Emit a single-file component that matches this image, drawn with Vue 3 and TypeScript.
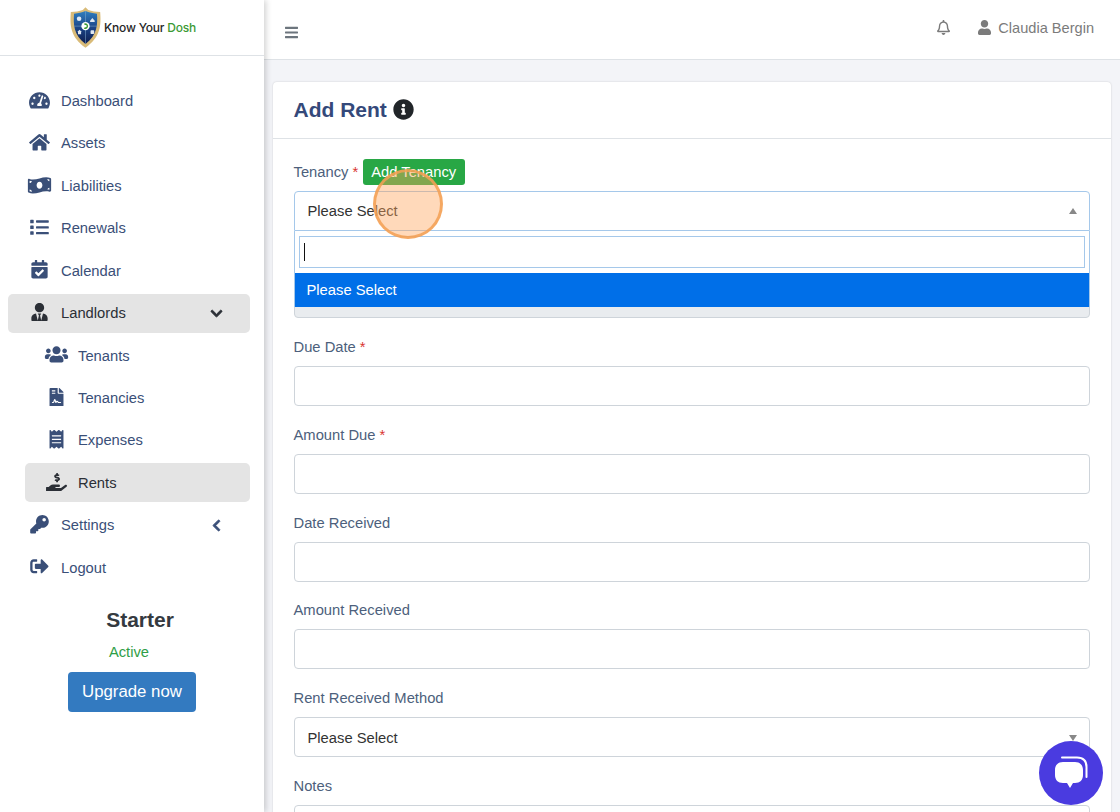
<template>
  <div class="app">
    <aside class="sidebar">
      <div class="brand">
        <svg class="shield" viewBox="0 0 36 44">
          <defs>
            <linearGradient id="shieldFill" x1="0" y1="0" x2="0" y2="1">
              <stop offset="0" stop-color="#2f7fc0" />
              <stop offset="0.5" stop-color="#1b4588" />
              <stop offset="1" stop-color="#0f1d4e" />
            </linearGradient>
          </defs>
          <path d="M18 0l3 3c4 1.500 8 2 13 2 1 14 1 27-16 39C1 32 1 19 2 5c5 0 9-.5 13-2z" fill="#d9bb78" />
          <path d="M18 4c4 1.500 8 2.500 12.500 3 .8 12 .5 23-12.500 33C5 30 4.700 19 5.500 7 10 6.500 14 5.500 18 4z" fill="url(#shieldFill)" />
          <path d="M18 4v36M5.200 20.500h25.600" stroke="#7fa8cc" stroke-width=".6" />
          <circle cx="18" cy="20.500" r="4.500" fill="#fff" />
          <path d="M16.200 18a3 3 0 1 1 0 5l1.100-1.400a1.300 1.300 0 1 0 0-2.200z" fill="#3c9a35" />
          <circle cx="11" cy="12.500" r="2.500" fill="#dfe8f2" />
          <path d="M23 14.500l2.500-3 2.500 3v1.500h-5z" fill="#dfe8f2" />
          <path d="M9 27l2.500-2.500L14 27h-.8v2.300H9.800V27z" fill="#dfe8f2" />
          <rect x="23.500" y="25" width="4" height="4" rx=".8" fill="#dfe8f2" />
        </svg>
        <span class="brand-name">Know Your <em>Dosh</em></span>
      </div>

      <nav class="nav">
        <a
          v-for="item in navItems"
          :key="item.label"
          class="nav-row"
          :class="{ sub: item.sub, active: item.active }"
        >
          <svg class="nav-icon" :viewBox="icons[item.icon].box"><path :d="icons[item.icon].d" /></svg>
          <span>{{ item.label }}</span>
          <svg v-if="item.chevron" class="chevron" :viewBox="icons[item.chevron].box">
            <path :d="icons[item.chevron].d" />
          </svg>
        </a>
      </nav>

      <div class="plan">
        <h3>Starter</h3>
        <p>Active</p>
        <button class="upgrade">Upgrade now</button>
      </div>
    </aside>

    <main class="main">
      <header class="topbar">
        <svg class="bars" :viewBox="icons.bars.box"><path :d="icons.bars.d" /></svg>
        <div class="top-right">
          <svg class="bell" :viewBox="icons.bell.box"><path :d="icons.bell.d" /></svg>
          <svg class="user" :viewBox="icons.user.box"><path :d="icons.user.d" /></svg>
          <span>Claudia Bergin</span>
        </div>
      </header>

      <section class="content">
        <div class="card">
          <div class="card-head">
            <h2>Add Rent</h2>
            <svg class="info" :viewBox="icons.info.box"><path :d="icons.info.d" /></svg>
          </div>
          <form class="card-body" @submit.prevent>
            <div class="field tenancy">
              <label>Tenancy <b>*</b> <span class="badge">Add Tenancy</span></label>
              <div class="select open">
                Please Select
                <i class="arrow up"></i>
              </div>
              <div class="dropdown">
                <div class="search"><span class="caret"></span></div>
                <div class="option">Please Select</div>
              </div>
            </div>

            <div class="field">
              <label>&nbsp;</label>
              <div class="input disabled"></div>
            </div>

            <div v-for="field in fields" :key="field.label" class="field">
              <label>{{ field.label }} <b v-if="field.required">*</b></label>
              <div class="input"></div>
            </div>

            <div class="field">
              <label>Rent Received Method</label>
              <div class="select">
                Please Select
                <i class="arrow"></i>
              </div>
            </div>

            <div class="field">
              <label>Notes</label>
              <div class="input notes"></div>
            </div>
          </form>
        </div>
      </section>
    </main>

    <div class="click-ring"></div>

    <button class="chat">
      <svg viewBox="0 0 64 64">
        <path d="M23 16.500h15c6 0 9.500 3.500 9.500 9.500v10" fill="none" stroke="#fff" stroke-width="2" stroke-linecap="round" />
        <path d="M24 21h12c5 0 8 3 8 8v5c0 5-3 8-8 8h-2l-3 5-3-5h-4c-5 0-8-3-8-8v-5c0-5 3-8 8-8z" fill="#fff" />
      </svg>
    </button>
  </div>
</template>

<script setup lang="ts">
interface Icon {
  box: string;
  d: string;
}

interface NavItem {
  label: string;
  icon: string;
  sub?: boolean;
  active?: boolean;
  chevron?: 'down' | 'left';
}

const icons: Record<string, Icon> = {
  gauge: {
    box: '0 0 576 512',
    d: 'M288 32C128.94 32 0 160.94 0 320c0 52.8 14.25 102.26 39.06 144.8 5.61 9.62 16.3 15.2 27.44 15.2h443c11.14 0 21.83-5.58 27.44-15.2C561.75 422.26 576 372.8 576 320c0-159.06-128.94-288-288-288zm0 64c14.71 0 26.58 10.13 30.32 23.65-1.11 2.26-2.64 4.23-3.45 6.67l-9.22 27.67c-5.13 3.49-10.97 6.01-17.64 6.01-17.67 0-32-14.33-32-32S270.33 96 288 96zM96 384c-17.67 0-32-14.33-32-32s14.33-32 32-32 32 14.33 32 32-14.33 32-32 32zm48-160c-17.67 0-32-14.33-32-32s14.33-32 32-32 32 14.33 32 32-14.33 32-32 32zm246.77-72.41l-61.33 184C343.13 347.33 352 364.54 352 384c0 11.72-3.38 22.55-8.88 32H232.88c-5.5-9.45-8.88-20.28-8.88-32 0-33.94 26.5-61.43 59.9-63.59l61.34-184.01c4.17-12.56 17.73-19.45 30.36-15.17 12.57 4.19 19.35 17.79 15.17 30.36zm14.66 57.2l15.52-46.55c3.47-1.29 7.13-2.23 11.05-2.23 17.67 0 32 14.33 32 32s-14.33 32-32 32c-11.38-.01-20.89-6.28-26.57-15.22zM480 384c-17.67 0-32-14.33-32-32s14.33-32 32-32 32 14.33 32 32-14.33 32-32 32z',
  },
  home: {
    box: '0 0 576 512',
    d: 'M280.37 148.26L96 300.11V464a16 16 0 0 0 16 16l112.06-.29a16 16 0 0 0 15.92-16V368a16 16 0 0 1 16-16h64a16 16 0 0 1 16 16v95.64a16 16 0 0 0 16 16.05L464 480a16 16 0 0 0 16-16V300L295.67 148.26a12.19 12.19 0 0 0-15.3 0zM571.6 251.47L488 182.56V44.05a12 12 0 0 0-12-12h-56a12 12 0 0 0-12 12v72.61L318.47 43a48 48 0 0 0-61 0L4.34 251.47a12 12 0 0 0-1.6 16.9l25.5 31A12 12 0 0 0 45.15 301l235.22-193.74a12.19 12.19 0 0 1 15.3 0L530.9 301a12 12 0 0 0 16.9-1.6l25.5-31a12 12 0 0 0-1.7-16.93z',
  },
  money: {
    box: '0 0 640 512',
    d: 'M621.16 54.46C582.37 38.19 543.55 32 504.75 32c-123.17-.01-246.33 62.34-369.5 62.34-30.89 0-61.76-3.92-92.65-13.72-3.47-1.1-6.95-1.62-10.35-1.62C15.04 79 0 92.32 0 110.81v317.26c0 12.63 7.23 24.6 18.84 29.46C57.63 473.81 96.45 480 135.25 480c123.17 0 246.34-62.35 369.51-62.35 30.89 0 61.76 3.92 92.65 13.72 3.47 1.1 6.95 1.62 10.35 1.62 17.21 0 32.25-13.32 32.25-31.81V83.93c-.01-12.64-7.24-24.6-18.85-29.47zM48 132.22c20.12 5.04 41.12 7.57 62.72 8.93C104.84 170.54 79 192.69 48 192.69v-60.47zm0 285v-47.78c34.37 0 62.18 27.27 63.71 61.4-22.53-1.81-43.59-6.31-63.71-13.62zM320 352c-44.19 0-80-42.99-80-96 0-53.02 35.82-96 80-96s80 42.98 80 96c0 53.03-35.83 96-80 96zm272 27.78c-17.52-4.39-35.71-6.85-54.32-8.44 5.87-26.08 27.5-45.88 54.32-49.28v57.72zm0-236.11c-30.89-3.91-54.86-29.7-55.81-61.55 19.54 2.17 38.09 6.23 55.81 12.66v48.89z',
  },
  list: {
    box: '0 0 512 512',
    d: 'M80 368H16a16 16 0 0 0-16 16v64a16 16 0 0 0 16 16h64a16 16 0 0 0 16-16v-64a16 16 0 0 0-16-16zm0-320H16A16 16 0 0 0 0 64v64a16 16 0 0 0 16 16h64a16 16 0 0 0 16-16V64a16 16 0 0 0-16-16zm0 160H16a16 16 0 0 0-16 16v64a16 16 0 0 0 16 16h64a16 16 0 0 0 16-16v-64a16 16 0 0 0-16-16zm416 176H176a16 16 0 0 0-16 16v32a16 16 0 0 0 16 16h320a16 16 0 0 0 16-16v-32a16 16 0 0 0-16-16zm0-320H176a16 16 0 0 0-16 16v32a16 16 0 0 0 16 16h320a16 16 0 0 0 16-16V80a16 16 0 0 0-16-16zm0 160H176a16 16 0 0 0-16 16v32a16 16 0 0 0 16 16h320a16 16 0 0 0 16-16v-32a16 16 0 0 0-16-16z',
  },
  calendar: {
    box: '0 0 448 512',
    d: 'M436 160H12c-6.627 0-12-5.373-12-12v-36c0-26.51 21.49-48 48-48h48V12c0-6.627 5.373-12 12-12h40c6.627 0 12 5.373 12 12v52h128V12c0-6.627 5.373-12 12-12h40c6.627 0 12 5.373 12 12v52h48c26.51 0 48 21.49 48 48v36c0 6.627-5.373 12-12 12zM12 192h424c6.627 0 12 5.373 12 12v260c0 26.51-21.49 48-48 48H48c-26.51 0-48-21.49-48-48V204c0-6.627 5.373-12 12-12zm333.296 95.947l-28.169-28.398c-4.667-4.705-12.265-4.736-16.97-.068L194.12 364.665l-45.98-46.352c-4.667-4.705-12.266-4.736-16.971-.068l-28.397 28.17c-4.705 4.667-4.736 12.265-.068 16.97l82.601 83.269c4.667 4.705 12.265 4.736 16.97.068l142.953-141.805c4.705-4.667 4.736-12.265.068-16.97z',
  },
  userTie: {
    box: '0 0 448 512',
    d: 'M224 256c70.7 0 128-57.3 128-128S294.7 0 224 0 96 57.3 96 128s57.3 128 128 128zm95.8 32.6L272 480l-32-136 32-56h-96l32 56-32 136-47.8-191.4C56.9 292 0 350.3 0 422.4V464c0 26.5 21.5 48 48 48h352c26.5 0 48-21.5 48-48v-41.6c0-72.1-56.9-130.4-128.2-133.8z',
  },
  users: {
    box: '0 0 640 512',
    d: 'M96 224c35.3 0 64-28.7 64-64s-28.7-64-64-64-64 28.7-64 64 28.7 64 64 64zm448 0c35.3 0 64-28.7 64-64s-28.7-64-64-64-64 28.7-64 64 28.7 64 64 64zm32 32h-64c-17.6 0-33.5 7.1-45.1 18.6 40.3 22.1 68.9 62 75.1 109.4h66c17.7 0 32-14.3 32-32v-32c0-35.3-28.7-64-64-64zm-256 0c61.9 0 112-50.1 112-112S381.9 32 320 32 208 82.1 208 144s50.1 112 112 112zm76.8 32h-8.3c-20.8 10-43.9 16-68.5 16s-47.6-6-68.5-16h-8.3C179.6 288 128 339.6 128 403.2V432c0 26.5 21.5 48 48 48h288c26.5 0 48-21.5 48-48v-28.8c0-63.6-51.6-115.2-115.2-115.2zm-223.7-13.4C161.5 263.1 145.6 256 128 256H64c-35.3 0-64 28.7-64 64v32c0 17.7 14.3 32 32 32h65.9c6.3-47.4 34.9-87.3 75.2-109.4z',
  },
  contract: {
    box: '0 0 384 512',
    d: 'M224 136V0H24C10.7 0 0 10.7 0 24v464c0 13.3 10.7 24 24 24h336c13.3 0 24-10.7 24-24V160H248c-13.2 0-24-10.800-24-24zM64 72c0-4.420 3.580-8 8-8h80c4.420 0 8 3.580 8 8v16c0 4.420-3.580 8-8 8H72c-4.420 0-8-3.580-8-8V72zm0 64c0-4.420 3.580-8 8-8h80c4.420 0 8 3.580 8 8v16c0 4.420-3.580 8-8 8H72c-4.420 0-8-3.580-8-8v-16zm192.810 248H304c8.840 0 16 7.160 16 16s-7.160 16-16 16h-47.190c-16.450 0-31.270-9.140-38.640-23.860-2.950-5.920-8.090-6.520-10.170-6.520s-7.220.590-10.020 6.190l-7.670 15.340a15.986 15.986 0 0 1-14.310 8.840c-.380 0-.750-.020-1.140-.050-6.450-.450-12-4.750-14.030-10.890L144 354.590l-10.610 31.880c-5.890 17.660-22.380 29.530-41 29.530H80c-8.840 0-16-7.160-16-16s7.160-16 16-16h12.390c4.830 0 9.110-3.080 10.640-7.660l18.190-54.640c3.300-9.810 12.440-16.410 22.780-16.410s19.480 6.590 22.770 16.410l13.880 41.640c19.770-16.190 54.050-9.700 66 14.160 2.020 4.060 5.960 6.500 10.160 6.500zM377 105L279.100 7c-4.500-4.500-10.600-7-17-7H256v128h128v-6.100c0-6.300-2.500-12.400-7-16.900z',
  },
  receipt: {
    box: '0 0 384 512',
    d: 'M358.400 3.200L320 48 265.600 3.200a15.900 15.900 0 0 0-19.200 0L192 48 137.600 3.200a15.900 15.900 0 0 0-19.200 0L64 48 25.600 3.200C15-4.700 0 2.800 0 16v480c0 13.200 15 20.700 25.600 12.800L64 464l54.400 44.800a15.900 15.900 0 0 0 19.200 0L192 464l54.400 44.800a15.900 15.900 0 0 0 19.200 0L320 464l38.400 44.800c10.500 7.900 25.600.4 25.600-12.800V16c0-13.200-15-20.700-25.600-12.800zM320 360c0 4.400-3.600 8-8 8H72c-4.400 0-8-3.600-8-8v-16c0-4.400 3.600-8 8-8h240c4.400 0 8 3.600 8 8v16zm0-96c0 4.400-3.600 8-8 8H72c-4.400 0-8-3.600-8-8v-16c0-4.400 3.600-8 8-8h240c4.400 0 8 3.600 8 8v16zm0-96c0 4.400-3.600 8-8 8H72c-4.400 0-8-3.600-8-8v-16c0-4.400 3.600-8 8-8h240c4.400 0 8 3.600 8 8v16z',
  },
  hand: {
    box: '0 0 576 512',
    d: 'M271.060 144.300l54.270 14.300a8.590 8.590 0 0 1 6.630 8.100c0 4.600-4.090 8.400-9.120 8.400h-35.600a30 30 0 0 1-11.190-2.200c-5.240-2.200-11.280-1.700-15.300 2l-19 17.500a11.680 11.680 0 0 0-2.250 2.660 11.420 11.420 0 0 0 3.880 15.740 83.420 83.420 0 0 0 34.510 11.500V240c0 8.800 7.830 16 17.370 16h17.370c9.550 0 17.380-7.200 17.380-16v-17.600c32.930-3.600 57.840-31 53.500-63-3.150-23-22.460-41.300-46.560-47.700l-54.270-14.300a8.590 8.590 0 0 1-6.630-8.100c0-4.600 4.090-8.400 9.120-8.400h35.600A30 30 0 0 1 332 83.100c5.230 2.200 11.280 1.700 15.300-2l19-17.500a11.310 11.310 0 0 0 2.170-2.600 11.430 11.430 0 0 0-3.840-15.780 83.820 83.820 0 0 0-34.520-11.500V16c0-8.800-7.820-16-17.370-16h-17.370C285.820 0 278 7.200 278 16v17.600c-32.890 3.600-57.850 31-53.510 63 3.140 23 22.510 41.300 46.570 47.700zM565.270 328.100c-11.800-10.700-30.200-10-42.600 0L430.270 402a63.640 63.640 0 0 1-40 14H272a16 16 0 0 1 0-32h78.290c15.900 0 30.710-10.900 33.250-26.600a31.200 31.200 0 0 0 .46-5.460A32 32 0 0 0 352 320H192a117.660 117.660 0 0 0-74.100 26.290L71.400 384H16a16 16 0 0 0-16 16v96a16 16 0 0 0 16 16h356.770a64 64 0 0 0 40-14L564 377a32 32 0 0 0 1.280-48.900z',
  },
  key: {
    box: '0 0 512 512',
    d: 'M512 176.001C512 273.203 433.202 352 336 352c-11.220 0-22.190-1.062-32.827-3.069l-24.012 27.014A23.999 23.999 0 0 1 261.223 384H224v40c0 13.255-10.745 24-24 24h-40v40c0 13.255-10.745 24-24 24H24c-13.255 0-24-10.745-24-24v-78.059c0-6.365 2.529-12.470 7.029-16.971l161.802-161.802C163.108 213.814 160 195.271 160 176 160 78.798 238.797.001 335.999 0 433.488-.001 512 78.511 512 176.001zM336 128c0 26.510 21.490 48 48 48s48-21.490 48-48-21.490-48-48-48-48 21.490-48 48z',
  },
  logout: {
    box: '0 0 512 512',
    d: 'M497 273L329 441c-15 15-41 4.500-41-17v-96H152c-13.300 0-24-10.700-24-24v-96c0-13.300 10.700-24 24-24h136V88c0-21.400 25.900-32 41-17l168 168c9.300 9.400 9.300 24.600 0 34zM192 436v-40c0-6.600-5.400-12-12-12H96c-17.700 0-32-14.300-32-32V160c0-17.700 14.300-32 32-32h84c6.600 0 12-5.400 12-12V76c0-6.600-5.400-12-12-12H96c-53 0-96 43-96 96v192c0 53 43 96 96 96h84c6.600 0 12-5.400 12-12z',
  },
  down: {
    box: '0 0 448 512',
    d: 'M207.029 381.476L12.686 187.132c-9.373-9.373-9.373-24.569 0-33.941l22.667-22.667c9.357-9.357 24.522-9.375 33.901-.04L224 284.505l154.745-154.021c9.379-9.335 24.544-9.317 33.901.04l22.667 22.667c9.373 9.373 9.373 24.569 0 33.941L240.971 381.476c-9.373 9.372-24.569 9.372-33.942 0z',
  },
  left: {
    box: '0 0 320 512',
    d: 'M34.520 239.030L228.870 44.690c9.370-9.370 24.570-9.370 33.940 0l22.670 22.670c9.360 9.360 9.370 24.520.04 33.900L131.490 256l154.020 154.750c9.340 9.380 9.320 24.540-.04 33.900l-22.670 22.670c-9.370 9.370-24.570 9.370-33.940 0L34.520 272.970c-9.370-9.370-9.370-24.570 0-33.940z',
  },
  bars: {
    box: '0 0 448 512',
    d: 'M16 132h416c8.837 0 16-7.163 16-16V76c0-8.837-7.163-16-16-16H16C7.163 60 0 67.163 0 76v40c0 8.837 7.163 16 16 16zm0 160h416c8.837 0 16-7.163 16-16v-40c0-8.837-7.163-16-16-16H16c-8.837 0-16 7.163-16 16v40c0 8.837 7.163 16 16 16zm0 160h416c8.837 0 16-7.163 16-16v-40c0-8.837-7.163-16-16-16H16c-8.837 0-16 7.163-16 16v40c0 8.837 7.163 16 16 16z',
  },
  bell: {
    box: '0 0 448 512',
    d: 'M439.390 362.290c-19.320-20.760-55.470-51.990-55.470-154.290 0-77.700-54.480-139.900-127.940-155.160V32c0-17.670-14.320-32-31.980-32s-31.980 14.330-31.980 32v20.840C118.560 68.100 64.080 130.300 64.080 208c0 102.300-36.150 133.530-55.470 154.290-6 6.450-8.660 14.160-8.610 21.710.110 16.400 12.980 32 32.100 32h383.800c19.120 0 32-15.600 32.100-32 .050-7.550-2.610-15.270-8.610-21.710zM67.530 368c21.220-27.970 44.420-74.330 44.530-159.420 0-.2-.060-.380-.060-.580 0-61.860 50.140-112 112-112s112 50.140 112 112c0 .2-.060.380-.060.580.110 85.100 23.310 131.460 44.530 159.420H67.530zM224 512c35.320 0 63.970-28.650 63.970-64H160.030c0 35.350 28.650 64 63.970 64z',
  },
  user: {
    box: '0 0 448 512',
    d: 'M224 256c70.700 0 128-57.300 128-128S294.700 0 224 0 96 57.300 96 128s57.300 128 128 128zm89.600 32h-16.700c-22.200 10.200-46.900 16-72.900 16s-50.600-5.800-72.900-16h-16.700C60.200 288 0 348.200 0 422.400V464c0 26.500 21.500 48 48 48h352c26.500 0 48-21.500 48-48v-41.600c0-74.200-60.200-134.400-134.400-134.400z',
  },
  info: {
    box: '0 0 512 512',
    d: 'M256 8C119.043 8 8 119.083 8 256c0 136.997 111.043 248 248 248s248-111.003 248-248C504 119.083 392.957 8 256 8zm0 110c23.196 0 42 18.804 42 42s-18.804 42-42 42-42-18.804-42-42 18.804-42 42-42zm56 254c0 6.627-5.373 12-12 12h-88c-6.627 0-12-5.373-12-12v-24c0-6.627 5.373-12 12-12h12v-64h-12c-6.627 0-12-5.373-12-12v-24c0-6.627 5.373-12 12-12h64c6.627 0 12 5.373 12 12v100h12c6.627 0 12 5.373 12 12v24z',
  },
};

const navItems: NavItem[] = [
  { label: 'Dashboard', icon: 'gauge' },
  { label: 'Assets', icon: 'home' },
  { label: 'Liabilities', icon: 'money' },
  { label: 'Renewals', icon: 'list' },
  { label: 'Calendar', icon: 'calendar' },
  { label: 'Landlords', icon: 'userTie', active: true, chevron: 'down' },
  { label: 'Tenants', icon: 'users', sub: true },
  { label: 'Tenancies', icon: 'contract', sub: true },
  { label: 'Expenses', icon: 'receipt', sub: true },
  { label: 'Rents', icon: 'hand', sub: true, active: true },
  { label: 'Settings', icon: 'key', chevron: 'left' },
  { label: 'Logout', icon: 'logout' },
];

const fields = [
  { label: 'Due Date', required: true },
  { label: 'Amount Due', required: true },
  { label: 'Date Received', required: false },
  { label: 'Amount Received', required: false },
];
</script>

<style>
html,
body {
  margin: 0;
  height: 100%;
  overflow: hidden;
}
</style>

<style scoped>
.app {
  display: flex;
  height: 812px;
  overflow: hidden;
  position: relative;
  background: #f3f4f8;
  font-family: "Liberation Sans", Arial, sans-serif;
  font-size: 14.75px;
  color: #3a4f78;
}

.sidebar {
  width: 264px;
  flex: none;
  background: #fff;
  box-shadow: 2px 0 6px rgba(0, 0, 0, 0.18);
  z-index: 2;
}

.brand {
  height: 55px;
  border-bottom: 1px solid #dee2e6;
  display: flex;
  align-items: center;
  padding-left: 69px;
  gap: 2px;
}

.shield {
  width: 33px;
  height: 41px;
  flex: none;
}

.brand-name {
  font-family: Inter, sans-serif;
  font-size: 12px;
  font-weight: 500;
  color: #262626;
  letter-spacing: -0.2px;
  white-space: nowrap;
}

.brand-name em {
  font-style: normal;
  color: #3c9a35;
}

.nav {
  padding: 25.5px 14px 0 8px;
}

.nav-row {
  height: 39px;
  margin-bottom: 3.43px;
  display: flex;
  align-items: center;
  padding-left: 18.5px;
  border-radius: 5px;
}

.nav-row.sub {
  margin-left: 17px;
}

.nav-row.active {
  background: #e4e4e4;
  color: #2b2f36;
}

.nav-icon {
  width: 25px;
  height: 18.6px;
  margin-right: 9.5px;
  margin-bottom: 2px;
  fill: currentColor;
  flex: none;
}

.chevron {
  height: 13px;
  width: 13px;
  margin-left: auto;
  margin-right: 27.5px;
  fill: currentColor;
  stroke: currentColor;
  stroke-width: 36px;
}

.plan {
  margin-top: 21px;
  display: flex;
  flex-direction: column;
  align-items: center;
}

.plan h3 {
  margin: 0 0 0 16px;
  font-size: 21px;
  line-height: 24px;
  color: #343a40;
}

.plan p {
  margin: 11px 6px 0 0;
  line-height: 18px;
  color: #2f9e47;
}

.upgrade {
  margin-top: 11px;
  width: 128px;
  height: 40px;
  border: 0;
  border-radius: 4px;
  background: #337ac0;
  color: #fff;
  font: inherit;
  font-size: 16.8px;
}

.main {
  flex: 1;
  min-width: 0;
}

.topbar {
  height: 59px;
  background: #fff;
  border-bottom: 1px solid #dee2e6;
  display: flex;
  align-items: center;
  justify-content: space-between;
  padding: 0 26px 0 21px;
}

.bars {
  width: 13px;
  height: 15px;
  margin-top: 5px;
  fill: #6c757d;
}

.top-right {
  display: flex;
  align-items: center;
  margin-top: -4px;
  font-size: 14.6px;
  color: #7b7b7b;
}

.bell {
  width: 13px;
  height: 15px;
  fill: #7b7b7b;
  margin-right: 28px;
}

.user {
  width: 13px;
  height: 15px;
  fill: #7b7b7b;
  margin-right: 7px;
}

.content {
  padding: 22px 9px 0 8.5px;
}

.card {
  background: #fff;
  border-radius: 4px 4px 0 0;
  box-shadow: 0 0 2px rgba(0, 0, 0, 0.18);
}

.card-head {
  height: 57px;
  box-sizing: border-box;
  border-bottom: 1px solid #dee2e6;
  display: flex;
  align-items: center;
  padding: 0 0 1px 21px;
  gap: 7px;
}

.card-head h2 {
  margin: 0;
  font-size: 21px;
  color: #34497a;
}

.info {
  width: 21px;
  height: 21px;
  margin: 0 0 1px -1px;
  fill: #212529;
}

.card-body {
  padding: 21.7px 21px 0;
}

.field {
  margin-bottom: 17.75px;
}

.tenancy {
  position: relative;
}

.field label {
  height: 22px;
  margin-bottom: 8px;
  display: flex;
  align-items: center;
  gap: 4px;
  color: #4d5f7c;
}

.field label b {
  font-weight: 400;
  color: #d9352f;
}

.badge {
  margin-left: 1px;
  height: 26px;
  padding: 0 9px 0 8px;
  display: flex;
  align-items: center;
  border-radius: 3px;
  background: #28a745;
  color: #fff;
}

.input,
.select {
  box-sizing: border-box;
  height: 40px;
  border: 1px solid #ced4da;
  border-radius: 4px;
  background: #fff;
}

.input.disabled {
  background: #e9ecef;
}

.input.notes {
  height: 90px;
}

.select {
  display: flex;
  align-items: center;
  justify-content: space-between;
  padding: 1px 12px 0 13px;
  color: #333;
}

.select.open {
  border-color: #a5c8ea;
  border-radius: 4px 4px 0 0;
}

.arrow {
  width: 0;
  height: 0;
  border-left: 4.5px solid transparent;
  border-right: 4.5px solid transparent;
  border-top: 6px solid #888;
}

.arrow.up {
  border-top: 0;
  border-bottom: 6px solid #888;
}

.dropdown {
  position: absolute;
  left: 0;
  right: 0;
  top: 70px;
  height: 76px;
  box-sizing: border-box;
  background: #fff;
  border: 1px solid #a5c8ea;
  border-top: 0;
  z-index: 3;
}

.search {
  box-sizing: border-box;
  height: 32px;
  margin: 5px 4px 5px;
  border: 1px solid #a5c8ea;
  display: flex;
  align-items: center;
  padding-left: 4px;
}

.caret {
  width: 1px;
  height: 18px;
  background: #111;
}

.option {
  height: 34px;
  line-height: 34px;
  padding-left: 12px;
  background: #006fe8;
  color: #fff;
}

.click-ring {
  position: absolute;
  left: 373px;
  top: 169px;
  width: 70px;
  height: 70px;
  box-sizing: border-box;
  border-radius: 50%;
  border: 3px solid rgba(243, 160, 84, 0.85);
  background: rgba(255, 165, 90, 0.42);
  z-index: 5;
}

.chat {
  position: fixed;
  left: 1039px;
  top: 741px;
  width: 64px;
  height: 64px;
  padding: 0;
  border: 0;
  border-radius: 50%;
  background: #4a3be0;
  z-index: 6;
}

.chat svg {
  display: block;
  width: 64px;
  height: 64px;
}
</style>
